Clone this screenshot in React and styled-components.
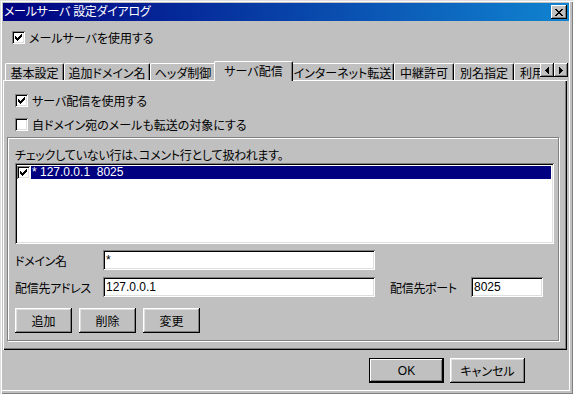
import styled, { createGlobalStyle } from "styled-components"

const Global = createGlobalStyle`
  html, body {
    margin: 0;
    padding: 0;
    background: #c0c0c0;
  }
  body {
    font-family: "Liberation Sans", "Noto Sans CJK JP", sans-serif;
    font-size: 12px;
    color: #000;
    font-feature-settings: "palt";
  }
`

const Window = styled.div`
  width: 573px;
  height: 394px;
  box-sizing: border-box;
  padding: 3px 4px 4px 3px;
  background: #c0c0c0;
  box-shadow: inset 1px 1px #dfdfdf, inset 2px 2px #fff, inset -1px -1px #808080, inset -3px -3px #c0c0c0, inset -4px -4px #fff;
  display: flex;
  flex-direction: column;
  overflow: hidden;
`
const TitleBar = styled.div`
  height: 18px;
  flex: none;
  display: flex;
  align-items: center;
  justify-content: space-between;
  padding: 0 2px 0 1px;
  background: linear-gradient(90deg, #000080, #1084d0);
  color: #fff;
`
const TitleText = styled.span`
  font-size: 12px;
  line-height: 18px;
  letter-spacing: -0.3px;
`
const SmallButton = styled.div`
  width: ${p => p.w || 16}px;
  height: 14px;
  box-sizing: border-box;
  background: #c0c0c0;
  box-shadow: inset -1px -1px #000, inset 1px 1px #fff, inset -2px -2px #808080;
  display: flex;
  align-items: center;
  justify-content: center;
  flex: none;
`
const MainCheck = styled.label`
  display: flex;
  align-items: center;
  height: 13px;
  margin: 10px 0 0 9px;
  gap: 4px;
`
const Box = styled.span`
  width: 13px;
  height: 13px;
  box-sizing: border-box;
  background: #fff;
  box-shadow: inset 1px 1px #808080, inset -1px -1px #fff, inset 2px 2px #000, inset -2px -2px #dfdfdf;
  display: flex;
  align-items: center;
  justify-content: center;
  flex: none;
`
const TabRow = styled.div`
  display: flex;
  height: 20px;
  margin: 17px 0 -1px 0;
  padding-left: 2px;
  position: relative;
  z-index: 1;
`
const TabClip = styled.div`
  width: 535px;
  height: 20px;
  overflow: hidden;
  display: flex;
  align-items: flex-start;
`
const Tab = styled.div`
  flex: none;
  box-sizing: border-box;
  width: ${p => (p.$active ? p.w + 4 : p.w)}px;
  height: ${p => (p.$active ? 20 : 17)}px;
  margin: ${p => (p.$active ? "0 -2px" : "2px 0 0")};
  position: relative;
  z-index: ${p => (p.$active ? 2 : 1)};
  background: #c0c0c0;
  border-top: 1px solid #fff;
  border-left: 1px solid #fff;
  border-right: 1px solid #000;
  border-radius: 2px 2px 0 0;
  box-shadow: inset -1px 0 #808080;
  display: flex;
  align-items: center;
  justify-content: center;
  padding-bottom: ${p => (p.$active ? 2 : 0)}px;
  white-space: nowrap;
`
const Arrows = styled.div`
  display: flex;
  margin-top: 2px;
`
const Panel = styled.div`
  width: 564px;
  height: 270px;
  box-sizing: border-box;
  flex: none;
  background: #c0c0c0;
  box-shadow: inset 1px 1px #fff, inset -1px -1px #000, inset -2px -2px #808080;
  padding: 14px 0 0 4px;
  display: flex;
  flex-direction: column;
`
const Check = styled.label`
  display: flex;
  align-items: center;
  gap: 4px;
  height: 13px;
  margin-left: 8px;
  margin-bottom: 11px;
`
const Group = styled.div`
  width: 552px;
  height: 204px;
  box-sizing: border-box;
  margin-top: -5px;
  border: 1px solid #808080;
  box-shadow: inset 1px 1px #fff, 1px 1px #fff;
  padding: 11px 0 0 7px;
  display: flex;
  flex-direction: column;
`
const Note = styled.div`
  height: 14px;
  line-height: 14px;
  letter-spacing: -0.2px;
`
const List = styled.div`
  width: 539px;
  height: 81px;
  box-sizing: border-box;
  background: #fff;
  box-shadow: inset 1px 1px #808080, inset -1px -1px #fff, inset 2px 2px #000, inset -2px -2px #dfdfdf;
  padding: 3px 3px 0 2px;
`
const ListRow = styled.div`
  display: flex;
  align-items: center;
  gap: 1px;
  height: 13px;
`
const Selected = styled.div`
  flex: 1;
  height: 13px;
  line-height: 13px;
  background: #000080;
  color: #fff;
  padding-left: 1px;
  white-space: pre;
`
const FieldRow = styled.div`
  display: flex;
  align-items: center;
  height: 20px;
  margin-top: ${p => p.top}px;
`
const Label = styled.span`
  width: ${p => p.w}px;
  flex: none;
  letter-spacing: -0.3px;
`
const Input = styled.div`
  width: ${p => p.w}px;
  height: 20px;
  box-sizing: border-box;
  flex: none;
  background: #fff;
  box-shadow: inset 1px 1px #808080, inset -1px -1px #fff, inset 2px 2px #000, inset -2px -2px #dfdfdf;
  padding: 0 3px;
  line-height: 20px;
  margin-right: ${p => p.mr || 0}px;
`
const ButtonRow = styled.div`
  display: flex;
  gap: ${p => p.gap}px;
  margin-top: ${p => p.top}px;
  justify-content: ${p => p.justify || "flex-start"};
  padding-right: ${p => p.pr || 0}px;
`
const Button = styled.div`
  width: ${p => p.w}px;
  height: 25px;
  box-sizing: border-box;
  background: #c0c0c0;
  display: flex;
  align-items: center;
  justify-content: center;
  box-shadow: ${p =>
    p.$default
      ? "inset 0 0 0 1px #000, inset -2px -2px #000, inset 2px 2px #fff, inset -3px -3px #808080"
      : "inset -1px -1px #000, inset 1px 1px #fff, inset -2px -2px #808080, inset 2px 2px #dfdfdf"};
`

const Tick = () => (
  <svg width="7" height="7" viewBox="0 0 7 7" shapeRendering="crispEdges">
    <path d="M6 0h1v3h-1zM5 1h1v3h-1zM4 2h1v3h-1zM0 2h1v3h-1zM1 3h1v3h-1zM2 4h1v3h-1zM3 3h1v3h-1z" fill="#000" />
  </svg>
)

const CloseX = () => (
  <svg width="8" height="7" viewBox="0 0 8 7" shapeRendering="crispEdges">
    <path d="M0 0h2v1h-2zM6 0h2v1h-2zM1 1h2v1h-2zM5 1h2v1h-2zM2 2h4v1h-4zM3 3h2v1h-2zM2 4h4v1h-4zM1 5h2v1h-2zM5 5h2v1h-2zM0 6h2v1h-2zM6 6h2v1h-2z" fill="#000" />
  </svg>
)

const Arrow = ({ dir }) => (
  <svg width="4" height="7" viewBox="0 0 4 7" shapeRendering="crispEdges">
    {dir === "left"
      ? <path d="M3 0h1v7h-1zM2 1h1v5h-1zM1 2h1v3h-1zM0 3h1v1h-1z" fill="#000" />
      : <path d="M0 0h1v7h-1zM1 1h1v5h-1zM2 2h1v3h-1zM3 3h1v1h-1z" fill="#000" />}
  </svg>
)

const tabs = [
  ["基本設定", 59],
  ["追加ドメイン名", 86],
  ["ヘッダ制御", 66],
  ["サーバ配信", 75],
  ["インターネット転送", 103],
  ["中継許可", 60],
  ["別名指定", 60],
  ["利用許可", 60],
]

export default function App() {
  return (
    <>
      <Global />
      <Window>
        <TitleBar>
          <TitleText>メールサーバ 設定ダイアログ</TitleText>
          <SmallButton><CloseX /></SmallButton>
        </TitleBar>

        <MainCheck>
          <Box><Tick /></Box>
          メールサーバを使用する
        </MainCheck>

        <TabRow>
          <TabClip>
            {tabs.map(([name, w], i) => (
              <Tab key={name} w={w} $active={i === 3}>{name}</Tab>
            ))}
          </TabClip>
          <Arrows>
            <SmallButton w={14}><Arrow dir="left" /></SmallButton>
            <SmallButton w={14}><Arrow dir="right" /></SmallButton>
          </Arrows>
        </TabRow>

        <Panel>
          <Check>
            <Box><Tick /></Box>
            サーバ配信を使用する
          </Check>
          <Check>
            <Box />
            自ドメイン宛のメールも転送の対象にする
          </Check>

          <Group>
            <Note>チェックしていない行は、コメント行として扱われます。</Note>
            <List>
              <ListRow>
                <Box><Tick /></Box>
                <Selected>{"* 127.0.0.1  8025"}</Selected>
              </ListRow>
            </List>

            <FieldRow top={6}>
              <Label w={88}>ドメイン名</Label>
              <Input w={272}>*</Input>
            </FieldRow>
            <FieldRow top={7}>
              <Label w={88}>配信先アドレス</Label>
              <Input w={272} mr={15}>127.0.0.1</Input>
              <Label w={81}>配信先ポート</Label>
              <Input w={72}>8025</Input>
            </FieldRow>

            <ButtonRow gap={7} top={11}>
              <Button w={57}>追加</Button>
              <Button w={57}>削除</Button>
              <Button w={57}>変更</Button>
            </ButtonRow>
          </Group>
        </Panel>

        <ButtonRow gap={6} top={8} justify="flex-end" pr={44}>
          <Button w={75} $default>OK</Button>
          <Button w={75}>キャンセル</Button>
        </ButtonRow>
      </Window>
    </>
  )
}
